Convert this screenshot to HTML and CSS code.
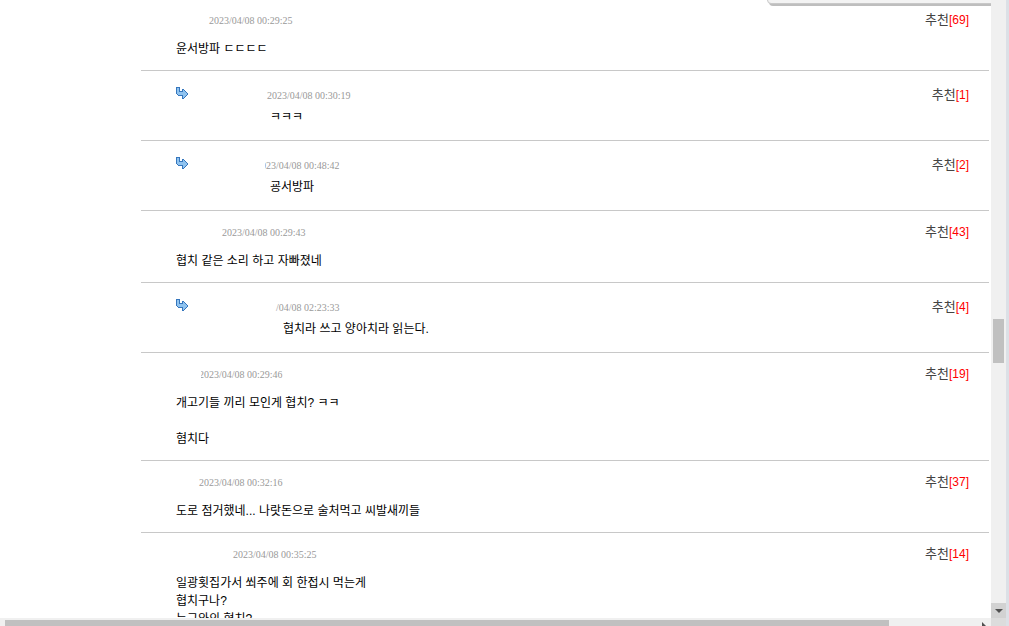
FILE: index.html
```html
<!DOCTYPE html>
<html lang="ko">
<head>
  <meta charset="UTF-8">
  <meta name="viewport" content="width=device-width, initial-scale=1.0">
  <title>댓글</title>
  <link rel="stylesheet" href="styles.css">
</head>
<body>
  <svg width="0" height="0" class="defs">
    <symbol id="reply-arrow" viewBox="0 0 12 12">
      <path d="M.5 .5h3v4h3v-2h1l4 4v1l-4 4h-1v-3h-4l-2-2z" fill="#8fc3ef" stroke="#3576bd" shape-rendering="crispEdges"/>
    </symbol>
  </svg>

  <div class="frame">
    <main class="view">
      <div class="popup"></div>
      <ul class="comments">
        <li class="comment">
          <div class="info"><span class="nick" style="width: 33px"></span><span class="date">2023/04/08 00:29:25</span></div>
          <a class="vote" href="#">추천<em>[69]</em></a>
          <p class="text">윤서방파 ㄷㄷㄷㄷ</p>
        </li>
        <li class="comment reply">
          <div class="info"><svg class="arrow"><use href="#reply-arrow"/></svg><span class="nick" style="width: 79px"></span><span class="date">2023/04/08 00:30:19</span></div>
          <a class="vote" href="#">추천<em>[1]</em></a>
          <p class="text">ㅋㅋㅋ</p>
        </li>
        <li class="comment reply">
          <div class="info"><svg class="arrow"><use href="#reply-arrow"/></svg><span class="nick" style="width: 73px"></span><span class="date cut-wide">023/04/08 00:48:42</span></div>
          <a class="vote" href="#">추천<em>[2]</em></a>
          <p class="text">굥서방파</p>
        </li>
        <li class="comment">
          <div class="info"><span class="nick" style="width: 46px"></span><span class="date">2023/04/08 00:29:43</span></div>
          <a class="vote" href="#">추천<em>[43]</em></a>
          <p class="text">협치 같은 소리 하고 자빠졌네</p>
        </li>
        <li class="comment reply deep">
          <div class="info"><svg class="arrow"><use href="#reply-arrow"/></svg><span class="nick" style="width: 88px"></span><span class="date">/04/08 02:23:33</span></div>
          <a class="vote" href="#">추천<em>[4]</em></a>
          <p class="text">협치라 쓰고 양아치라 읽는다.</p>
        </li>
        <li class="comment">
          <div class="info"><span class="nick" style="width: 23px"></span><span class="date cut">2023/04/08 00:29:46</span></div>
          <a class="vote" href="#">추천<em>[19]</em></a>
          <p class="text">개고기들 끼리 모인게 협치? ㅋㅋ<br><br>혐치다</p>
        </li>
        <li class="comment">
          <div class="info"><span class="nick" style="width: 23px"></span><span class="date">2023/04/08 00:32:16</span></div>
          <a class="vote" href="#">추천<em>[37]</em></a>
          <p class="text">도로 점거했네... 나랏돈으로 술처먹고 씨발새끼들</p>
        </li>
        <li class="comment">
          <div class="info"><span class="nick" style="width: 57px"></span><span class="date">2023/04/08 00:35:25</span></div>
          <a class="vote" href="#">추천<em>[14]</em></a>
          <p class="text">일광횟집가서 쐬주에 회 한접시 먹는게<br>협치구나?<br>누그와의 협치?</p>
        </li>
      </ul>
    </main>

    <div class="vbar">
      <div class="vthumb"></div>
      <button class="down" aria-label="아래로"><svg width="8" height="4"><path d="M0 0h8L4 4z" fill="#505050"/></svg></button>
    </div>
    <div class="hbar">
      <div class="hthumb"></div>
      <svg class="right" width="5" height="8"><path d="M0 0l5 5-5 5z" fill="#505050"/></svg>
    </div>
    <div class="corner"></div>
  </div>
</body>
</html>
```

FILE: styles.css
```css
body {
  margin: 0;
  background: #dce0e6;
  font-family: "Liberation Sans", "Noto Sans CJK KR", sans-serif;
  font-size: 12px;
  line-height: 18px;
  color: #000;
}
.defs {
  position: absolute;
}
.frame {
  display: grid;
  grid-template-columns: 1fr 15px;
  grid-template-rows: 1fr 8px;
  height: 100vh;
  margin-right: 3px;
  overflow: hidden;
}
.view {
  position: relative;
  overflow: hidden;
  background: #fff;
}
.popup {
  position: absolute;
  top: -20px;
  right: -10px;
  width: 232px;
  height: 22px;
  background: #f3f3f3;
  border: 1px solid #c8c8c8;
  border-radius: 4px;
  box-shadow: 2px 2px 0 #bebebe;
}

/* comments */
.comments {
  list-style: none;
  margin: -2px 2px 0 141px;
  padding: 0;
}
.comment {
  display: grid;
  grid-template-columns: 1fr auto;
  border-top: 1px solid #c8c8c8;
  padding: 12px 20px 12px 35px;
}
.info {
  display: flex;
  height: 29px;
}
.nick {
  flex: none;
}
.date {
  font-family: "Liberation Serif", serif;
  font-size: 10px;
  line-height: 20px;
  color: #999;
}
.cut {
  clip-path: inset(0 0 0 2px);
}
.cut-wide {
  clip-path: inset(0 0 0 4px);
}
.vote {
  font-size: 13px;
  color: #444;
  text-decoration: none;
}
.vote em {
  font-size: 12px;
  font-style: normal;
  color: #f00;
}
.text {
  grid-column: 1 / -1;
  margin: 0;
}
.reply {
  padding-top: 15px;
  padding-bottom: 14px;
}
.reply .info {
  height: 22px;
}
.reply .text {
  padding-left: 94px;
}
.deep .text {
  padding-left: 107px;
}
.arrow {
  width: 12px;
  height: 12px;
  margin-top: 1px;
}

/* scroll bars */
.vbar {
  display: flex;
  flex-direction: column;
  justify-content: space-between;
  background: #f0f0f0;
}
.vthumb {
  height: 44px;
  margin: 319px 2px 0;
  background: #c0c0c0;
}
.down {
  display: flex;
  align-items: center;
  justify-content: center;
  height: 15px;
  padding: 0;
  border: 0;
  background: #d2d2d2;
}
.hbar {
  display: flex;
  justify-content: space-between;
  padding: 0 4px 0 5px;
  background: #f0f0f0;
}
.hthumb {
  width: 90%;
  margin-top: 2px;
  background: #c0c0c0;
}
.right {
  margin-top: 4px;
}
.corner {
  background: #dcdcdc;
}
```
